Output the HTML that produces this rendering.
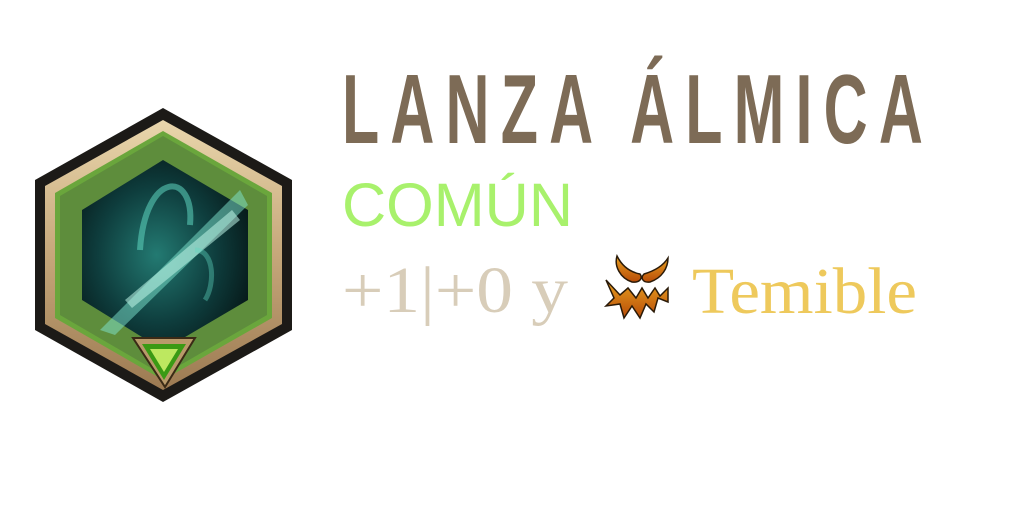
<!DOCTYPE html>
<html><head><meta charset="utf-8"><style>
html,body{margin:0;padding:0;background:#fff;width:1024px;height:512px;overflow:hidden}
</style></head><body>
<svg width="1024" height="512" viewBox="0 0 1024 512" xmlns="http://www.w3.org/2000/svg">
<defs>
<linearGradient id="gold" x1="0" y1="0" x2="0" y2="1">
<stop offset="0" stop-color="#e9d6ac"/><stop offset="0.5" stop-color="#c6a77a"/><stop offset="1" stop-color="#9c7a52"/></linearGradient>
<radialGradient id="bg" cx="0.45" cy="0.5" r="0.6">
<stop offset="0" stop-color="#237a72"/><stop offset="0.6" stop-color="#0e3d3d"/><stop offset="1" stop-color="#071a1a"/></radialGradient>
<linearGradient id="orange" x1="0" y1="0" x2="0" y2="1"><stop offset="0" stop-color="#e8a020"/><stop offset="1" stop-color="#b84c08"/></linearGradient>
</defs>
<polygon points="163,108 292,180 292,330 163,402 35,330 35,180" fill="#1c1a17"/>
<polygon points="163,120 282,186 282,324 163,390 45,324 45,186" fill="url(#gold)"/>
<polygon points="163,131 272,193 272,318 163,380 55,318 55,193" fill="#6aa63c"/>
<polygon points="163,136 267,196 267,315 163,375 60,315 60,196" fill="#5e8d3c"/>
<polygon points="163,160 248,210 248,300 163,350 82,300 82,210" fill="url(#bg)"/>
<path d="M100,330 L240,190 L248,205 L115,335 Z" fill="#7fe6d0" opacity="0.5"/>
<path d="M125,300 L232,210 L240,220 L132,308 Z" fill="#bff5e8" opacity="0.55"/>
<path d="M140,250 C145,170 195,170 190,225" stroke="#5fd6c0" stroke-width="6" fill="none" opacity="0.55"/>
<path d="M195,250 C215,250 215,285 205,300" stroke="#5fd6c0" stroke-width="5" fill="none" opacity="0.4"/>
<polygon points="133,338 195,338 165,387" fill="#b89a6a" stroke="#3a2a16" stroke-width="2"/>
<polygon points="142,344 186,344 164,380" fill="#3a9a14"/>
<polygon points="150,349 178,349 164,372" fill="#bde860"/>
<text x="342" y="143" font-family="Liberation Sans, sans-serif" font-size="98" fill="#7d6b56" textLength="592" lengthAdjust="spacingAndGlyphs" font-weight="bold" style="letter-spacing:18px">LANZA ÁLMICA</text>
<text x="342" y="226" font-family="Liberation Sans, sans-serif" font-size="61" fill="#a8f16c" textLength="231" lengthAdjust="spacingAndGlyphs">COMÚN</text>
<text x="342" y="312" font-family="Liberation Serif, serif" font-size="66" fill="#d8cdb9" textLength="226" lengthAdjust="spacingAndGlyphs">+1|+0 y</text>
<text x="692" y="313" font-family="Liberation Serif, serif" font-size="66" fill="#eec95c" textLength="225" lengthAdjust="spacingAndGlyphs">Temible</text>
<path d="M617,256 C614,266 620,278 632,282 C640,283 643,278 640,274 C630,272 622,266 617,256 Z" fill="url(#orange)" stroke="#2a1a08" stroke-width="1.5"/>
<path d="M668,258 C668,268 662,278 650,282 C643,283 640,278 644,274 C654,271 663,266 668,258 Z" fill="url(#orange)" stroke="#2a1a08" stroke-width="1.5"/>
<path d="M606,280 L614,298 L606,306 L620,304 L624,318 L632,306 L640,318 L646,304 L654,312 L658,298 L668,302 L668,288 L660,296 L655,288 L648,298 L642,288 L636,298 L628,288 L620,295 Z" fill="url(#orange)" stroke="#2a1a08" stroke-width="1.5"/>
</svg>
</body></html>
